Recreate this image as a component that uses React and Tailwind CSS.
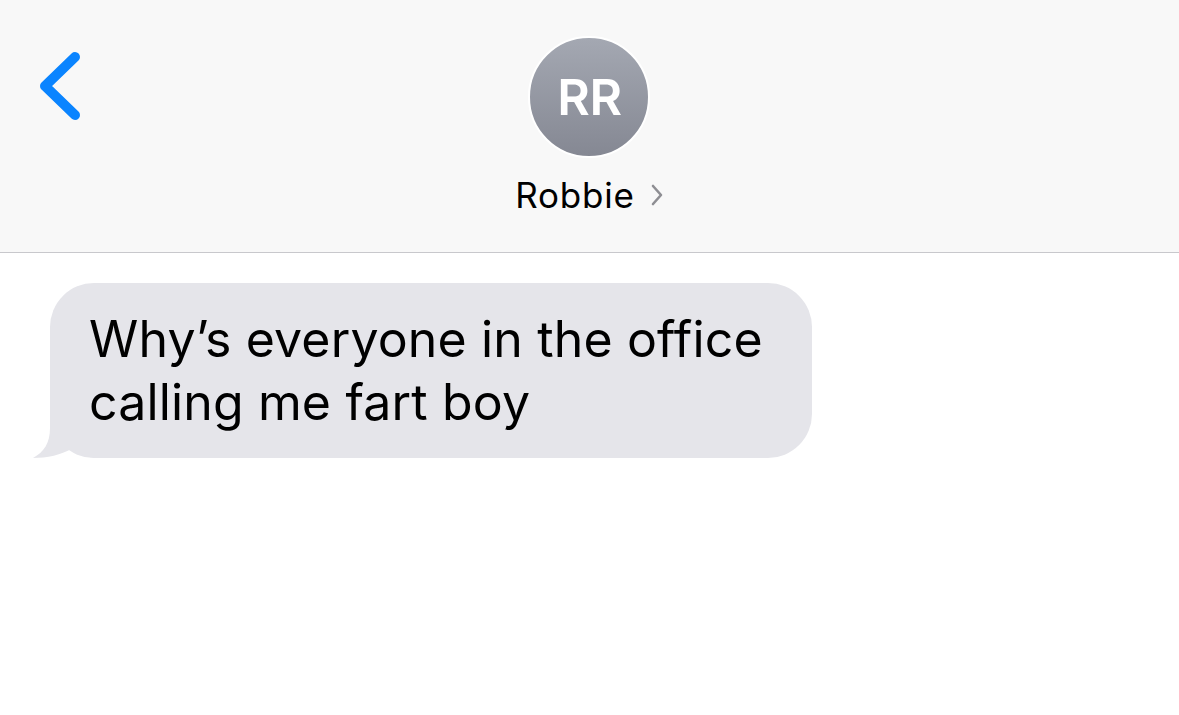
import React from 'react'

// ── Icons ─────────────────────────────────────────────────────────────────────
const BackIcon = () => (
  <svg width="50" height="80" viewBox="0 0 50 80" fill="none" stroke="#0a84ff" strokeWidth="10" strokeLinecap="round" strokeLinejoin="round">
    <polyline points="39 9 9 38 39 67"/>
  </svg>
)

const SmallChevron = () => (
  <svg width="14" height="24" viewBox="0 0 14 24" fill="none" stroke="#8e8e93" strokeWidth="2.6" strokeLinecap="round" strokeLinejoin="round">
    <polyline points="3 3 11 12 3 21"/>
  </svg>
)

// tail sits on the bubble's bottom-left corner
const BubbleTail = () => (
  <svg width="70" height="46" viewBox="0 0 70 46" className="absolute left-[-18px] bottom-0">
    <path d="M18 0 L18 16 C18 31 12 40 1 46 C15 46 29 43 41 36 C48 42 56 46 66 46 L70 46 L70 0 Z" fill="#e5e5ea"/>
  </svg>
)

export default function App() {
  return (
    <div className="w-[1179px] h-[715px] bg-white overflow-hidden" style={{ fontFamily: 'Inter, "Noto Sans", sans-serif' }}>
      {/* Header */}
      <header className="h-[253px] bg-[#f8f8f8] border-b border-[#c8c8cc] grid grid-cols-[1fr_auto_1fr]">
        <div className="pl-[36px] pt-[48px]">
          <BackIcon/>
        </div>
        <div className="flex flex-col items-center pt-[36px]">
          <div className="w-[122px] h-[122px] rounded-full border-2 border-white bg-gradient-to-b from-[#a4a8b2] to-[#858893] flex items-center justify-center">
            <span className="text-white text-[50px] font-semibold tracking-[-0.5px] leading-none">RR</span>
          </div>
          <div className="flex items-center gap-[15px] mt-[15px]">
            <span className="text-[35px] leading-[44px] text-black tracking-[0.8px]">Robbie</span>
            <SmallChevron/>
          </div>
        </div>
        <div/>
      </header>

      {/* Messages */}
      <main className="pt-[30px] pl-[50px]">
        <div className="relative w-[762px] h-[175px] bg-[#e5e5ea] rounded-[44px] pl-[39px] pt-[25px]">
          <BubbleTail/>
          <p className="relative text-[50px] leading-[63px] text-black tracking-[0.15px]">
            Why’s everyone in the office<br/>calling me fart boy
          </p>
        </div>
      </main>
    </div>
  )
}
